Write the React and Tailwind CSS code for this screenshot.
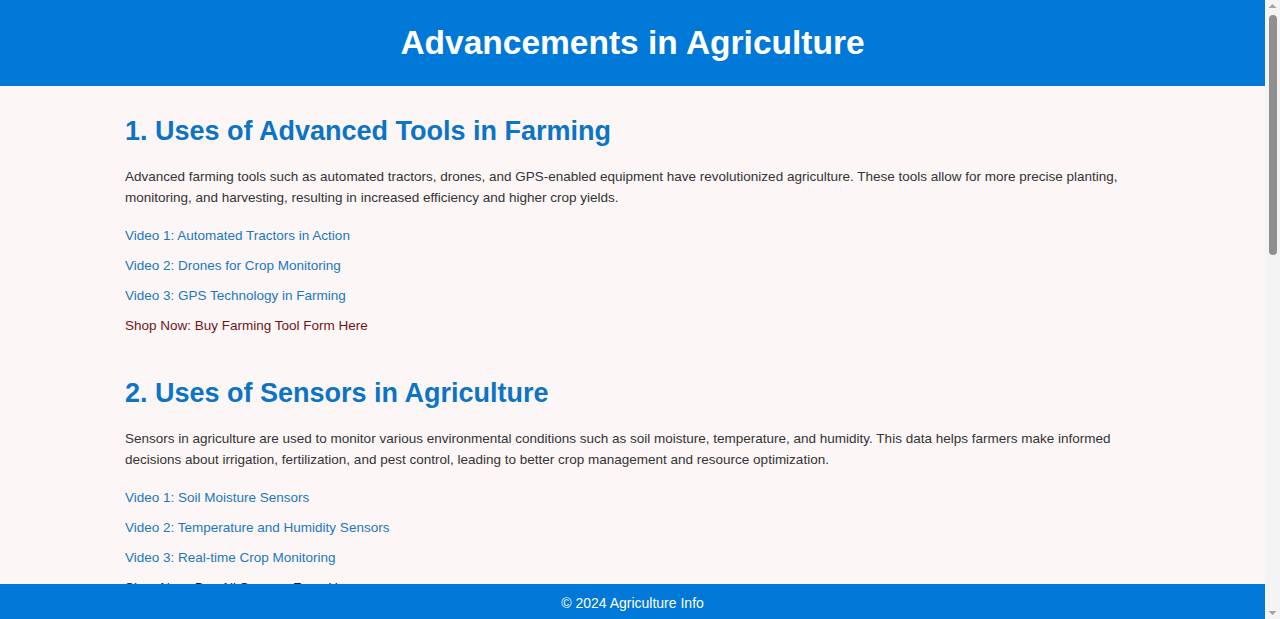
import React from "react";

const sections = [
  {
    title: "1. Uses of Advanced Tools in Farming",
    text: "Advanced farming tools such as automated tractors, drones, and GPS-enabled equipment have revolutionized agriculture. These tools allow for more precise planting, monitoring, and harvesting, resulting in increased efficiency and higher crop yields.",
    videos: [
      "Video 1: Automated Tractors in Action",
      "Video 2: Drones for Crop Monitoring",
      "Video 3: GPS Technology in Farming",
    ],
    shop: "Shop Now: Buy Farming Tool Form Here",
    shopClass: "text-[#6e1616]",
  },
  {
    title: "2. Uses of Sensors in Agriculture",
    text: "Sensors in agriculture are used to monitor various environmental conditions such as soil moisture, temperature, and humidity. This data helps farmers make informed decisions about irrigation, fertilization, and pest control, leading to better crop management and resource optimization.",
    videos: [
      "Video 1: Soil Moisture Sensors",
      "Video 2: Temperature and Humidity Sensors",
      "Video 3: Real-time Crop Monitoring",
    ],
    shop: "Shop Now: Buy All Sensors Form Here",
    shopClass: "text-[#1c1c1c]",
  },
  {
    title: "3. Uses of Smart Irrigation Systems",
    text: "Smart irrigation systems use weather data, soil sensors, and automated controllers to deliver the right amount of water at the right time. This reduces water waste, lowers costs, and keeps crops healthy throughout the growing season.",
    videos: [
      "Video 1: Drip Irrigation Automation",
      "Video 2: Weather-based Watering Controllers",
      "Video 3: Water Saving Techniques",
    ],
    shop: "Shop Now: Buy Irrigation Systems Form Here",
    shopClass: "text-[#6e1616]",
  },
  {
    title: "4. Uses of Biotechnology in Agriculture",
    text: "Biotechnology helps develop crop varieties that are resistant to pests, diseases, and harsh weather. These improved seeds increase productivity and reduce the need for chemical pesticides, supporting more sustainable farming practices.",
    videos: [
      "Video 1: Genetically Improved Crops",
      "Video 2: Tissue Culture Techniques",
      "Video 3: Biofertilizers and Biopesticides",
    ],
    shop: "Shop Now: Buy Improved Seeds Form Here",
    shopClass: "text-[#6e1616]",
  },
  {
    title: "5. Uses of Farm Management Software",
    text: "Farm management software brings together data from machines, sensors, and records in one place. Farmers can plan crops, track expenses, and analyze yields, making it easier to run a profitable and well-organized farm.",
    videos: [
      "Video 1: Planning Crops with Software",
      "Video 2: Tracking Farm Expenses",
      "Video 3: Analyzing Yield Data",
    ],
    shop: "Shop Now: Buy Farm Software Form Here",
    shopClass: "text-[#6e1616]",
  },
];

function FakeScrollbar() {
  return (
    <div className="fixed top-0 right-0 bottom-0 w-[15px] bg-[#f4f4f4] flex flex-col items-center">
      <svg width="15" height="12" viewBox="0 0 15 12" className="shrink-0">
        <polygon points="3.5,8 7.5,4 11.5,8" fill="#a3a3a3" />
      </svg>
      <div className="mt-[3px] w-[8px] h-[240px] rounded-full bg-[#8f8f8f]" />
      <div className="flex-1" />
      <svg width="15" height="12" viewBox="0 0 15 12" className="shrink-0">
        <polygon points="3.5,4 7.5,8 11.5,4" fill="#a3a3a3" />
      </svg>
    </div>
  );
}

export default function App() {
  return (
    <div className="min-h-screen bg-[#fcf6f6] font-['Liberation_Sans',Arial,sans-serif] text-[#333333]">
      <div className="mr-[15px]">
        <header className="h-[86px] bg-[#0078d7] flex items-center justify-center">
          <h1 className="text-[33.5px] leading-[40px] font-bold text-white">
            Advancements in Agriculture
          </h1>
        </header>
        <main className="mx-auto max-w-[1015px] pt-[30px] pb-[80px]">
          {sections.map((s) => (
            <section key={s.title} className="mb-[42px]">
              <h2 className="text-[27px] leading-[30px] font-bold text-[#0b74c5] mb-[20px]">
                {s.title}
              </h2>
              <p className="text-[13.5px] leading-[21px] mb-[18px]">{s.text}</p>
              <div className="flex flex-col gap-[10px] text-[13.5px] leading-[20px]">
                {s.videos.map((v) => (
                  <a key={v} href="#" className="text-[#1a78c2] self-start">
                    {v}
                  </a>
                ))}
                <a href="#" className={`${s.shopClass} self-start`}>
                  {s.shop}
                </a>
              </div>
            </section>
          ))}
        </main>
      </div>
      <footer className="fixed bottom-0 left-0 right-[15px] h-[35px] bg-[#0078d7] text-center pt-[11px] text-white text-[14px] leading-[16px]">
        © 2024 Agriculture Info
      </footer>
      <FakeScrollbar />
    </div>
  );
}
